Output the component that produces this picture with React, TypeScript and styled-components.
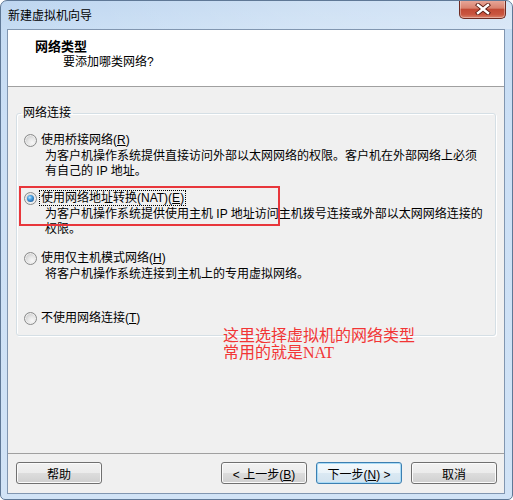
import React from "react";
import styled, { createGlobalStyle } from "styled-components";

const Global = createGlobalStyle`
  html, body { margin: 0; padding: 0; background: #ffffff; }
  body {
    font-family: "Liberation Sans", "Noto Sans CJK SC", sans-serif;
    font-size: 12px;
    color: #000;
  }
`;

const Window = styled.div`
  width: 513px;
  height: 500px;
  box-sizing: border-box;
  border: 1px solid #5f7896;
  border-radius: 7px 7px 5px 5px;
  background: linear-gradient(180deg, #bed6f0 0px, #c6dcf3 28px, #cbdff5 120px, #d1e3f6 100%);
  display: flex;
  flex-direction: column;
  overflow: hidden;
`;

const TitleBar = styled.div`
  height: 28px;
  flex: none;
  display: flex;
  justify-content: space-between;
  align-items: flex-start;
  padding: 0 6px 0 7px;
  background: linear-gradient(90deg, rgba(255,255,255,0) 0%, rgba(255,255,255,0.25) 60%, rgba(255,255,255,0.35) 100%);
`;

const Title = styled.div`
  margin-top: 6px;
  line-height: 16px;
  font-family: "Noto Sans CJK SC", sans-serif;
  font-size: 12px;
`;

const CloseButton = styled.div`
  width: 47px;
  height: 19px;
  margin-top: -1px;
  box-sizing: border-box;
  border: 1px solid #6e2b22;
  border-top: none;
  border-radius: 0 0 5px 5px;
  background: linear-gradient(180deg, #e9aa9c 0%, #d9826f 45%, #c24a35 52%, #c9553f 80%, #d9826b 100%);
  box-shadow: inset 0 0 0 1px rgba(255,255,255,0.35);
  display: flex;
  align-items: center;
  justify-content: center;
`;

const Client = styled.div`
  flex: 1;
  min-height: 0;
  margin: 0 7px 5px 6px;
  border: 1px solid #8196b0;
  background: #f0f0f0;
  display: flex;
  flex-direction: column;
`;

const Header = styled.div`
  height: 57px;
  box-sizing: border-box;
  flex: none;
  background: #ffffff;
  border-bottom: 1px solid #a0a0a0;
  padding: 8px 0 0 27px;
`;

const HeaderTitle = styled.div`
  font-family: "Noto Sans CJK SC", sans-serif;
  font-weight: bold;
  font-size: 13px;
  line-height: 16px;
`;

const HeaderSub = styled.div`
  padding-left: 28px;
  line-height: 16px;
`;

const Body = styled.div`
  flex: 1;
  min-height: 0;
  position: relative;
  padding: 18px 8px 0 8px;
`;

const Group = styled.fieldset`
  margin: 0;
  padding: 0;
  min-width: 0;
  border: 1px solid #d5dfe5;
  border-radius: 3px;
  box-shadow: inset 1px 1px 0 #ffffff, 1px 1px 0 #ffffff;
`;

const Legend = styled.legend`
  margin-left: 4px;
  padding: 0 2px;
  line-height: 16px;
  font-size: 12px;
`;

const OptionList = styled.div`
  display: grid;
  grid-template-rows: 58px 60px 60px auto;
  padding: 11px 0 9px 7px;
`;

const Option = styled.div`
  display: flex;
  flex-direction: column;
`;

const OptionLabel = styled.div`
  display: flex;
  align-items: center;
  gap: 3px;
  height: 16px;
`;

const Radio = styled.span<{ $checked?: boolean }>`
  position: relative;
  width: 13px;
  height: 13px;
  box-sizing: border-box;
  border-radius: 50%;
  border: 1px solid #8a8b8b;
  background: radial-gradient(circle at 65% 70%, #f8f8f8 0%, #e6e6e6 40%, #c6c6c6 85%, #b9b9b9 100%);
  box-shadow: inset 0 0 0 1px #eeeeee;
  flex: none;
  &::after {
    content: "";
    display: ${(p) => (p.$checked ? "block" : "none")};
    position: absolute;
    left: 2px;
    top: 2px;
    width: 7px;
    height: 7px;
    border-radius: 50%;
    background: radial-gradient(circle at 40% 35%, #bfe6ff 0%, #4aa3e4 35%, #1f5d9f 80%, #173f73 100%);
  }
`;

const LabelText = styled.span<{ $focused?: boolean }>`
  line-height: 14px;
  padding: 0 1px;
  outline: ${(p) => (p.$focused ? "1px dotted #000" : "none")};
  white-space: nowrap;
`;

const Desc = styled.div`
  margin-left: 21px;
  margin-top: 1px;
  line-height: 15px;
`;

const DescLine = styled.div`
  white-space: nowrap;
`;

const Highlight = styled.div`
  position: absolute;
  left: 11px;
  top: 99px;
  width: 261px;
  height: 40px;
  box-sizing: border-box;
  border: 2px solid #e8363b;
  pointer-events: none;
`;

const Annotation = styled.div`
  position: absolute;
  left: 215px;
  top: 240px;
  font-family: "Liberation Serif", "Noto Sans CJK SC", serif;
  font-size: 16px;
  line-height: 17px;
  color: #f23535;
  pointer-events: none;
`;

const Footer = styled.div`
  flex: none;
  border-top: 1px solid #a0a0a0;
  padding: 8px 7px 9px 8px;
  display: flex;
  gap: 9px;
`;

const Button = styled.button<{ $default?: boolean; $push?: boolean }>`
  width: 86px;
  height: 22px;
  padding: 0;
  margin-right: ${(p) => (p.$push ? "auto" : "0")};
  box-sizing: border-box;
  font-family: "Liberation Sans", "Noto Sans CJK SC", sans-serif;
  font-size: 12px;
  color: #000;
  border-radius: 3px;
  border: 1px solid ${(p) => (p.$default ? "#3c7fb1" : "#707070")};
  background: ${(p) =>
    p.$default
      ? "linear-gradient(180deg, #f4f9fc 0%, #eaf3f9 50%, #dbe9f3 50%, #d2e3ef 100%)"
      : "linear-gradient(180deg, #f2f2f2 0%, #ebebeb 50%, #dddddd 50%, #cfcfcf 100%)"};
  box-shadow: ${(p) =>
    p.$default ? "inset 0 0 0 1px #a9dbf6" : "inset 0 0 0 1px #fbfbfb"};
`;

const CloseIcon = () => (
  <svg width="16" height="12" viewBox="0 0 16 12">
    <path d="M3 2 L13 10 M13 2 L3 10" stroke="#5b1d14" strokeWidth="4.2" strokeLinecap="square" />
    <path d="M3 2 L13 10 M13 2 L3 10" stroke="#ffffff" strokeWidth="2.4" strokeLinecap="square" />
  </svg>
);

export default function App() {
  return (
    <>
      <Global />
      <Window>
        <TitleBar>
          <Title>新建虚拟机向导</Title>
          <CloseButton>
            <CloseIcon />
          </CloseButton>
        </TitleBar>
        <Client>
          <Header>
            <HeaderTitle>网络类型</HeaderTitle>
            <HeaderSub>要添加哪类网络?</HeaderSub>
          </Header>
          <Body>
            <Group>
              <Legend>网络连接</Legend>
              <OptionList>
                <Option>
                  <OptionLabel>
                    <Radio />
                    <LabelText>
                      使用桥接网络(<u>R</u>)
                    </LabelText>
                  </OptionLabel>
                  <Desc>
                    <DescLine>为客户机操作系统提供直接访问外部以太网网络的权限。客户机在外部网络上必须</DescLine>
                    <DescLine>有自己的 IP 地址。</DescLine>
                  </Desc>
                </Option>
                <Option>
                  <OptionLabel>
                    <Radio $checked />
                    <LabelText $focused>
                      使用网络地址转换(NAT)(<u>E</u>)
                    </LabelText>
                  </OptionLabel>
                  <Desc>
                    <DescLine>为客户机操作系统提供使用主机 IP 地址访问主机拨号连接或外部以太网网络连接的</DescLine>
                    <DescLine>权限。</DescLine>
                  </Desc>
                </Option>
                <Option>
                  <OptionLabel>
                    <Radio />
                    <LabelText>
                      使用仅主机模式网络(<u>H</u>)
                    </LabelText>
                  </OptionLabel>
                  <Desc>
                    <DescLine>将客户机操作系统连接到主机上的专用虚拟网络。</DescLine>
                  </Desc>
                </Option>
                <Option>
                  <OptionLabel>
                    <Radio />
                    <LabelText>
                      不使用网络连接(<u>T</u>)
                    </LabelText>
                  </OptionLabel>
                </Option>
              </OptionList>
            </Group>
            <Highlight />
            <Annotation>
              <div>这里选择虚拟机的网络类型</div>
              <div>常用的就是NAT</div>
            </Annotation>
          </Body>
          <Footer>
            <Button $push>帮助</Button>
            <Button>
              &lt; 上一步(<u>B</u>)
            </Button>
            <Button $default>
              下一步(<u>N</u>) &gt;
            </Button>
            <Button>取消</Button>
          </Footer>
        </Client>
      </Window>
    </>
  );
}
